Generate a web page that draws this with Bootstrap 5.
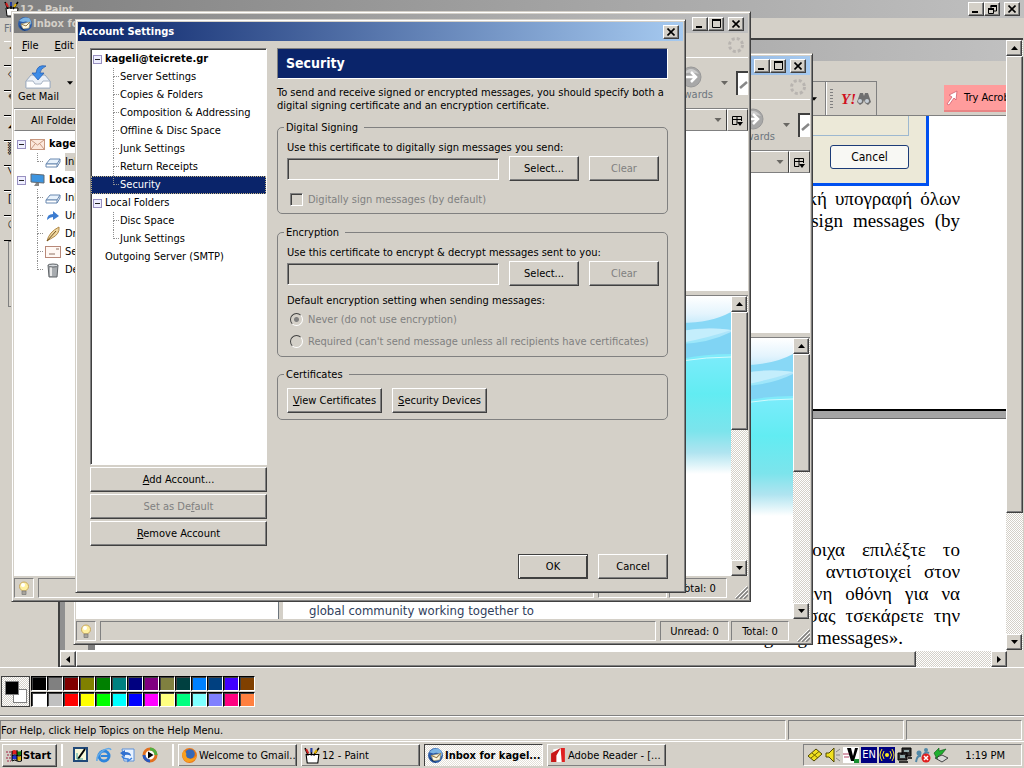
<!DOCTYPE html>
<html lang="en">
<head>
<meta charset="utf-8">
<meta name="viewport" content="width=device-width, initial-scale=1">
<title>12 - Paint</title>
<link href="https://cdn.jsdelivr.net/npm/bootstrap@5.3.0/dist/css/bootstrap.min.css" rel="stylesheet">
<style>
:root{--face:#d4d0c8;--shade:#808080;--dark:#404040;--navy:#0a246a}
body{font-family:"DejaVu Sans Condensed","DejaVu Sans",sans-serif;font-size:11px;line-height:13px;color:#000;background:var(--face)}
button,input{font:inherit;line-height:13px;color:#000}
svg{display:block;flex:none}
ul{list-style:none;margin:0;padding:0}
.nowrap{white-space:nowrap}
.w-btn{background:var(--face);border:1px solid;border-color:#fff var(--dark) var(--dark) #fff;box-shadow:inset -1px -1px var(--shade);border-radius:0;padding:0;height:25px;flex:none;color:#000}
.w-btn:disabled{color:var(--shade)}
.w-btn.is-default{border-color:var(--dark);box-shadow:inset 1px 1px #fff,inset -1px -1px var(--dark)}
.cap-btn{width:16px;height:14px;padding:0;border:1px solid;border-color:#fff var(--dark) var(--dark) #fff;background:var(--face);box-shadow:inset -1px -1px var(--shade);display:flex;align-items:center;justify-content:center}
.sunk{border:1px solid;border-color:var(--shade) #fff #fff var(--shade)}
.sunk2{border:1px solid;border-color:var(--shade) #fff #fff var(--shade);box-shadow:inset 1px 1px var(--dark)}
.frame{background:var(--face);border:1px solid;border-color:var(--face) var(--dark) var(--dark) var(--face);box-shadow:inset 1px 1px #fff,inset -1px -1px var(--shade);padding:2px;display:flex;flex-direction:column;overflow:hidden}
.floating{position:absolute}
.win-a{left:11px;top:11px;width:740px;height:591px;z-index:3}
.win-b{left:73px;top:53px;width:740px;height:592px;z-index:2}
.win-dlg{left:75px;top:19px;width:611px;height:574px;z-index:4}
.title-bar{height:19px;font-weight:700;color:#fff;white-space:nowrap}
.t-idle{background:linear-gradient(90deg,#808080,#c0c0c0);color:var(--face)}
.t-live{background:linear-gradient(90deg,#0a246a,#a6caf0)}
.frame .title-bar{padding-left:3px}
.win-dlg .title-bar{padding-left:1px}
.menu-row{height:24px}
.tool-row{height:52px;border-top:1px solid #fff;border-bottom:1px solid var(--shade)}
.head-cell{height:22px;border:1px solid;border-color:#fff var(--dark) var(--shade) #fff;background:var(--face)}
.folders{width:203px;background:#fff}
.folders li,.tree li{height:18px;line-height:18px;white-space:nowrap;position:relative}
.folders .top-item{padding-left:3px;font-weight:700}
.sub-item{padding-left:31px}
.sub-item::before{content:"";position:absolute;left:23px;top:0;width:6px;height:9px;border:dotted #909090;border-width:0 0 1px 1px}
.sub-item:not(.last)::after{content:"";position:absolute;left:23px;top:9px;height:9px;border-left:1px dotted #909090}
.in-focus{background:var(--face)}
.tree .sub-item{padding-left:29px}
.tree .sub-item::before,.tree .sub-item::after{left:22px}
.tree .top-item{padding-left:2px;gap:3px}
.tree .lone{padding-left:14px}
.tree .chosen{background:var(--navy);color:#fff;outline:1px dotted #c0b080;outline-offset:-1px}
.tree{padding-top:1px}
.toggle{width:9px;height:9px;padding:0;border:1px solid #9890c0;background:#eef;display:inline-flex;align-items:center;justify-content:center;flex:none}
.toggle::before{content:"";width:5px;height:1px;background:#222}
.status-row{height:23px;padding-top:2px}
.cell{height:20px;display:flex;align-items:center;justify-content:center;white-space:nowrap}
.lamp{width:20px}
.unread{width:69px;margin-right:2px}
.total{width:58px}
.sbar{width:17px;flex:none;background:repeating-conic-gradient(#fff 0 25%,#d4d0c8 0 50%) 0 0/2px 2px;display:flex;flex-direction:column}
.sbar-h{height:17px;background:repeating-conic-gradient(#fff 0 25%,#d4d0c8 0 50%) 0 0/2px 2px;display:flex;border-top:1px solid #fff}
.arrow{width:16px;height:16px;flex:none;padding:0;background:var(--face);border:1px solid;border-color:#fff var(--dark) var(--dark) #fff;box-shadow:inset -1px -1px var(--shade);display:flex;align-items:center;justify-content:center}
.thumb{background:var(--face);border:1px solid;border-color:#fff var(--dark) var(--dark) #fff;box-shadow:inset -1px -1px var(--shade)}
.thumb-mail{height:118px}
.thumb-doc{flex:0 0 457px}
.thumb-h{flex:0 0 840px}
.mail-list{height:160px;background:#fff}
.preview{background:#fff;border-top:1px solid var(--shade)}
.blurb{font-size:13px;line-height:16px;color:#30405c;padding:0 0 0 26px}
.search-stub{width:12px;height:24px;background:#fff;border:solid var(--dark);border-width:2px 0 0 2px;overflow:hidden}
.banner{height:31px;background:var(--navy);color:#fff;font-size:14px;font-weight:700;padding-left:8px;margin:0 0 7px}
.intro{margin:0 0 9px}
.right-pane{min-width:0}
fieldset{border:1px solid var(--shade);border-radius:5px;padding:7px 8px 0 9px;margin:0}
legend{float:none;width:auto;font-size:11px;line-height:13px;height:13px;margin:0 0 0 -3px;padding:0 6px 0 2px}
.cert{height:22px;background:var(--face);border-radius:0;flex:1 1 0;min-width:0;padding:0 3px;outline:0}
.cert-row{gap:10px;padding:2px 0 0}
.w70{width:70px}
.opt{color:var(--shade);height:13px;gap:5px;padding-left:3px}
.opt input{appearance:none;margin:0;width:13px;height:13px;flex:none}
.box{border:1px solid;border-color:var(--shade) #fff #fff var(--shade);box-shadow:inset 1px 1px var(--dark)}
.dot{border:1px solid;border-color:var(--dark) #fff #fff var(--dark);border-radius:50%}
.dot:checked{background:radial-gradient(circle,var(--shade) 0 2px,transparent 3px)}
.sign-opt{margin:12px 0 7px}
.fs-enc{margin-top:12px}
.fs-cert{margin-top:11px}
.opt-1{margin-top:6px}
.opt-2{margin:9px 0 8px}
.cert-btns{gap:10px;padding-bottom:6px}
.cert-btns .w-btn{width:95px}
.col-left{width:177px}
.acts{gap:2px;padding-top:2px}
.dlg-main{padding:7px 15px 8px 12px;gap:10px}
.dlg-foot{padding:0 15px 11px;gap:10px}
.paint-title{height:18px}
.paint-menu{height:20px}
.paint-body{padding-right:1px}
.toolbox{width:58px;padding:3px 0 0 4px}
.tool{height:25px;border-bottom:1px solid #000;border-top:1px solid #fff;padding-left:4px;overflow:hidden}
.tool-opts{height:66px;border:1px solid var(--shade);margin-left:4px;border-right:0}
.canvas{border:solid var(--dark);border-width:2px 0 0 2px}
.corner{width:16px}
.r-title{height:21px;background:linear-gradient(90deg,#808080,#c0c0c0)}
.r-menu{height:20px}
.r-tools{height:35px;border-bottom:1px solid var(--shade)}
.r-toolset{border:solid var(--shade);border-width:1px 1px 0 0;width:817px}
.y-part{width:51px;border-left:1px solid var(--shade);box-shadow:inset 1px 0 #fff;gap:8px}
.grip{width:3px;height:20px;background:repeating-linear-gradient(#808080 0 1px,transparent 1px 3px)}
.yh{font:italic 700 15px/16px "Liberation Serif",serif;color:#d01020}
.promo{background:#ff9c9c;height:27px;width:62px;overflow:hidden;border-bottom:2px solid #e88484;gap:6px;padding-left:2px}
.side{width:28px;background:var(--face);border-left:5px solid #909090}
.side-edge{width:7px;background:var(--shade)}
.page{background:#fff;padding-right:46px;font-family:"Liberation Serif",serif;font-size:19px;line-height:22px}
.page .ln{display:flex;justify-content:flex-end;height:22px;white-space:nowrap}
.g8{gap:8px}.g10{gap:10px}.g13{gap:13px}.g17{gap:17px}
.shot{height:70px;width:400px;background:#ece9d8;border:solid #0050f0;border-width:0 3px 3px 0;margin:0 31px 2px 0;padding:0 17px 0 0}
.shot-in{height:20px;border:solid #9db8d0;border-width:0 1px 1px 0;margin-bottom:9px}
.shot button{height:24px;width:79px;background:#f8f8f4;border:1px solid #1c3c78;border-radius:3px;font:12px/16px "DejaVu Sans Condensed",sans-serif;padding:0}
.gap-page{height:10px;background:#a4a4a4;border-top:2px solid #000;border-bottom:1px solid #666}
.sheet-1{height:293px}
.sheet-2{padding-bottom:1px}
.last-ln{padding-right:57px}
.palette{height:49px;border-top:1px solid #fff;padding:8px 1px;gap:1px}
.inkwell{width:29px;height:31px;border:1px solid var(--dark);background:repeating-conic-gradient(#fff 0 25%,#d4d0c8 0 50%) 0 0/2px 2px;position:relative}
.ink{position:absolute;width:14px;height:14px;border:1px solid var(--shade)}
.fore{left:3px;top:4px;background:#000;z-index:1}
.back{left:11px;top:12px;background:#fff}
.inks{display:grid;grid-template-columns:repeat(14,16px);grid-auto-rows:16px}
.swatch{width:16px;height:15px;padding:0;border:1px solid;border-color:#000 #fff #fff #000;box-shadow:inset 1px 1px var(--dark)}
.p-status{height:25px;border-top:1px solid #fff;padding:3px 2px 0 0;box-shadow:0 -1px var(--shade);gap:2px}
.p-status .cell{width:116px}
.taskbar{height:27px;border-top:1px solid #fff;padding:2px 2px 2px}
.taskbar .w-btn{height:23px;white-space:nowrap}
.taskbar .start{width:55px;font-weight:700;gap:1px;padding:0 3px}
.taskbar .task{width:119px;display:flex;align-items:center;gap:1px;padding:0 2px;overflow:hidden}
.taskbar .task.on{font-weight:700;background:repeating-conic-gradient(#fff 0 25%,#e4e0d8 0 50%) 0 0/2px 2px;border-color:var(--dark) #fff #fff var(--dark);box-shadow:none}
.divide{width:2px;border:solid;border-width:0 1px;border-color:var(--shade) #fff}
.tray{width:219px;gap:2px;padding:0 16px 0 3px}
.lang{background:#000080;color:#fff;width:16px;height:16px;line-height:16px;text-align:center}
.quick{gap:7px;padding:0 14px 0 10px}
</style>
</head>
<body>
<svg width="0" height="0" class="position-absolute" aria-hidden="true">
<defs>
<linearGradient id="sea" x1="0" y1="0" x2="0" y2="1"><stop offset="0" stop-color="#fff"/><stop offset=".1" stop-color="#e4f4fd"/><stop offset=".2" stop-color="#b0e4fa"/><stop offset=".36" stop-color="#78ecfa"/><stop offset=".55" stop-color="#62ecf2"/><stop offset=".76" stop-color="#7ce4ec"/><stop offset=".88" stop-color="#b0e4f0"/><stop offset="1" stop-color="#fff"/></linearGradient>
<symbol id="wave" viewBox="0 0 50 178"><rect width="50" height="178" fill="url(#sea)"/><path d="M0 27Q30 27 50 16V34Q26 30 0 35Z" fill="#88d8f6"/><path d="M0 35Q30 31 50 34Q30 41 0 47Z" fill="#c4eefc"/><path d="M0 48Q28 47 50 36V58Q24 58 0 63Z" fill="#80d4f4"/><path d="M0 65Q26 61 50 61" fill="none" stroke="#d0fafc"/></symbol>
<symbol id="bird" viewBox="0 0 16 16"><circle cx="8" cy="8" r="7" fill="#2c5ca8"/><path d="M2 5Q6 0 12 2Q15 5 14 9Q11 4 6 6Z" fill="#7cb4e4"/><path d="M4 8L13 6L12 12L6 13Z" fill="#fff8e0" stroke="#aa9868" stroke-width=".6"/><path d="M4 8L9 10L13 6" fill="none" stroke="#907848"/><path d="M2 9Q4 14 9 15L5 12Z" fill="#102850"/></symbol>
<symbol id="min" viewBox="0 0 8 8"><path d="M0 6h6v2H0z"/></symbol>
<symbol id="max" viewBox="0 0 9 9"><path d="M.5 1v7.500h8V1" fill="none" stroke="#000"/><path d="M0 0h9v2H0z"/></symbol>
<symbol id="rest" viewBox="0 0 9 9"><path d="M3 3V1h5.500v5H6M.5 4v4.500h5V4" fill="none" stroke="#000"/><path d="M2.500 0h6.500v2H2.500zM0 3h6v2H0z"/></symbol>
<symbol id="cls" viewBox="0 0 8 8"><path d="M.5 .5L7.500 7.500M7.500 .5L.5 7.500" stroke="#000" stroke-width="1.600"/></symbol>
<symbol id="dn" viewBox="0 0 7 4"><path d="M0 0h7L3.500 4z"/></symbol>
<symbol id="up" viewBox="0 0 7 4"><path d="M0 4h7L3.500 0z"/></symbol>
<symbol id="throb" viewBox="0 0 16 16"><circle cx="8" cy="8" r="6.500" fill="none" stroke="#b8b4b0" stroke-width="3" stroke-dasharray="3 2.100"/></symbol>
<symbol id="fwd" viewBox="0 0 22 22"><circle cx="11" cy="11" r="10" fill="#a8a8a8" stroke="#989898"/><path d="M3 8Q11 -2 19 8Q11 5 3 8Z" fill="#ccc"/><path d="M4 11H16M11 6L16 11L11 16" fill="none" stroke="#fff" stroke-width="2.500"/></symbol>
<symbol id="pick" viewBox="0 0 11 11"><path d="M.5 9.500V1.500H9.500V6M.5 9.500H5M.5 4.500H9.500M5 1.500V9.500" fill="none" stroke="#000"/><path d="M5 7h6L8 11z"/></symbol>
<symbol id="glass" viewBox="0 0 10 14"><path d="M2 11L9 5" stroke="#888" stroke-width="2.500"/></symbol>
<symbol id="bulb" viewBox="0 0 12 15"><circle cx="6" cy="5.500" r="4.500" fill="#fff0a0" stroke="#c8a860"/><circle cx="5" cy="4" r="2" fill="#fff"/><path d="M4 10h4v3.500H4z" fill="#a8a49c" stroke="#777" stroke-width=".7"/></symbol>
<symbol id="rsz" viewBox="0 0 13 13"><path d="M1 13L13 1M5 13L13 5M9 13L13 9" stroke="#808080" stroke-width="1.500"/><path d="M0 12L12 0M4 12L13 3M8 12L13 7" stroke="#fff"/></symbol>
<symbol id="tray-in" viewBox="0 0 16 12"><path d="M1 8L5 3H15L12 8Z" fill="#e8f2fc" stroke="#6888b0"/><path d="M1 8h11v3H1z" fill="#fff" stroke="#6888b0"/><path d="M12 11L15 6V3" fill="none" stroke="#6888b0"/></symbol>
<symbol id="paint" viewBox="0 0 16 16"><path d="M2 7h12l-1 8H3z" fill="#fff" stroke="#000"/><path d="M4 8L1 1M7 8V1M9 8L14 1" stroke="#000" stroke-width="1.500"/><path d="M2 2l2 4" stroke="#d02020" stroke-width="2"/><path d="M12 3l-2 3" stroke="#e0b000" stroke-width="2"/><path d="M7 1v4" stroke="#2040c0" stroke-width="1.500"/></symbol>
</defs></svg>

<div class="vh-100 d-flex flex-column overflow-hidden position-relative">

  <!-- Paint -->
  <header class="title-bar paint-title t-idle d-flex align-items-center px-1 flex-shrink-0">
    <svg width="16" height="16"><use href="#paint"/></svg><span class="flex-grow-1">12 - Paint</span>
    <button class="cap-btn" aria-label="Minimize"><svg width="8" height="8"><use href="#min"/></svg></button>
    <button class="cap-btn" aria-label="Restore"><svg width="9" height="9"><use href="#rest"/></svg></button>
    <button class="cap-btn ms-1" aria-label="Close"><svg width="8" height="8"><use href="#cls"/></svg></button>
  </header>
  <nav class="paint-menu d-flex align-items-center px-1 text-secondary flex-shrink-0">File</nav>
  <main class="paint-body d-flex flex-grow-1 overflow-hidden">
    <div class="toolbox flex-shrink-0">
      <div class="tool">✦</div><div class="tool">◇</div><div class="tool">✎</div><div class="tool">◢</div><div class="tool">▒</div><div class="tool">╲</div><div class="tool">[</div><div class="tool">○</div>
      <div class="tool-opts"></div>
    </div>
    <div class="canvas d-flex flex-column flex-grow-1 overflow-hidden">
      <div class="d-flex flex-grow-1 overflow-hidden">
        <div class="d-flex flex-column flex-grow-1 overflow-hidden">
          <div class="r-title flex-shrink-0"></div><div class="r-menu flex-shrink-0"></div>
          <div class="r-tools d-flex justify-content-between flex-shrink-0">
            <div class="r-toolset d-flex justify-content-end">
              <div class="d-flex align-items-center pe-2"><svg width="6" height="4"><use href="#dn"/></svg></div>
              <div class="y-part d-flex align-items-center ps-1"><span class="grip"></span>
                <span class="d-flex align-items-center"><span class="yh">Y!</span><svg width="15" height="13" viewBox="0 0 15 13"><path d="M1 10L4 1h3l1 3 1-3h3l3 9-3 3-3-2-1-3-1 3-3 2z" fill="#707070"/><circle cx="4" cy="9" r="2" fill="#c8d0d8"/><circle cx="11" cy="9" r="2" fill="#c8d0d8"/></svg></span></div>
            </div>
            <div class="promo d-flex align-items-center nowrap mt-1"><svg width="12" height="16" viewBox="0 0 12 16"><path d="M1 14L6 7L3 5L11 1L10 10L8 8L3 15Z" fill="#fff" stroke="#d06070" stroke-width=".8"/></svg><span>Try Acrobat</span></div>
          </div>
          <div class="d-flex flex-grow-1 overflow-hidden">
            <div class="side flex-shrink-0"></div><div class="side-edge flex-shrink-0"></div>
            <article class="flex-grow-1 d-flex flex-column overflow-hidden">
              <section class="page sheet-1 flex-shrink-0">
                <div class="shot ms-auto"><div class="shot-in"></div><div class="d-flex justify-content-end"><button>Cancel</button></div></div>
                <p class="ln g8 m-0"><span>ηλεκτρονική</span><span>υπογραφή</span><span>όλων</span></p>
                <p class="ln g10 m-0"><span>sign</span><span>messages</span><span>(by</span></p>
              </section>
              <div class="gap-page flex-shrink-0"></div>
              <section class="page sheet-2 flex-grow-1 d-flex flex-column justify-content-end overflow-hidden">
                <p class="ln g17 m-0"><span>αντίστοιχα</span><span>επιλέξτε</span><span>το</span></p>
                <p class="ln g13 m-0"><span>αντιστοιχεί</span><span>στον</span></p>
                <p class="ln g13 m-0"><span>επόμενη</span><span>οθόνη</span><span>για</span><span>να</span></p>
                <p class="ln g10 m-0"><span>σας</span><span>τσεκάρετε</span><span>την</span></p>
                <p class="ln g10 m-0 last-ln"><span>signing</span><span>messages».</span></p>
              </section>
            </article>
          </div>
        </div>
        <div class="sbar"><button class="arrow" aria-label="Scroll up"><svg width="7" height="4"><use href="#up"/></svg></button><div class="thumb thumb-doc"></div><div class="flex-grow-1"></div><button class="arrow" aria-label="Scroll down"><svg width="7" height="4"><use href="#dn"/></svg></button></div>
      </div>
      <div class="d-flex flex-shrink-0"><div class="sbar-h flex-grow-1 overflow-hidden"><button class="arrow" aria-label="Scroll left"><svg width="4" height="7" viewBox="0 0 4 7"><path d="M4 0v7L0 3.500z"/></svg></button><div class="thumb thumb-h"></div><button class="arrow ms-auto" aria-label="Scroll right"><svg width="4" height="7" viewBox="0 0 4 7"><path d="M0 0v7L4 3.500z"/></svg></button></div><div class="corner"></div></div>
    </div>
  </main>
  <div class="palette d-flex flex-shrink-0">
    <div class="inkwell"><span class="ink fore"></span><span class="ink back"></span></div>
    <div class="inks" id="inks"></div>
  </div>
  <div class="p-status d-flex flex-shrink-0">
    <div class="cell sunk flex-grow-1 justify-content-start">For Help, click Help Topics on the Help Menu.</div><div class="cell sunk"></div><div class="cell sunk"></div>
  </div>

  <!-- Taskbar -->
  <footer class="taskbar d-flex flex-shrink-0">
    <button class="w-btn start d-flex align-items-center"><svg width="16" height="14" viewBox="0 0 16 14"><path d="M6 2q2-2 5 0v4q-3-2-5 0z" fill="#e02020"/><path d="M11 2q2 1 4 0v4q-2 1-4 0z" fill="#108010"/><path d="M6 7q2-2 5 0v4q-3-2-5 0z" fill="#2030d0"/><path d="M11 7q2 1 4 0v4q-2 1-4 0z" fill="#e0b000"/><path d="M15.500 1v11q-2 1-4.500 0-2-2-5 0V2M11 1v11M6 6.500q3-1.500 5 0 2 1 4 0" fill="none" stroke="#000"/><path d="M0 3h5M1 6h4M0 9h5M1 12h4" stroke="#a02040" stroke-dasharray="2 1"/></svg><span>Start</span></button>
    <div class="divide ms-1"></div>
    <div class="d-flex align-items-center quick">
      <svg width="16" height="16" viewBox="0 0 16 16"><rect x="1" y="1" width="13" height="13" fill="#f8f8d8" stroke="#204878" stroke-width="2"/><path d="M5 12L12 2" stroke="#000" stroke-width="2"/><path d="M4 6v6h6" fill="none" stroke="#40a0a0"/></svg>
      <svg width="16" height="16" viewBox="0 0 16 16"><circle cx="8" cy="9" r="5" fill="none" stroke="#2c84dc" stroke-width="3"/><path d="M5 9h9" stroke="#2c84dc" stroke-width="2"/><path d="M1 14Q0 8 8 3Q14 0 15 3" fill="none" stroke="#60a8e8" stroke-width="1.500"/></svg>
      <svg width="16" height="16" viewBox="0 0 16 16"><path d="M3 2h12v12H5z" fill="#e8f2ff" stroke="#5c90d8"/><path d="M1 6L6 3v2q6 0 6 4Q9 7 6 8v2z" fill="#3070d0"/><path d="M13 11l-4 3v-2q-5 0-6-3" fill="none" stroke="#3c80dc" stroke-width="1.500"/></svg>
      <svg width="16" height="16" viewBox="0 0 16 16"><circle cx="8" cy="8" r="6" fill="#fff" stroke="#e07020" stroke-width="3"/><path d="M8 2a6 6 0 0 1 6 6" fill="none" stroke="#50b040" stroke-width="3"/><path d="M8 14a6 6 0 0 1-6-6" fill="none" stroke="#2858c0" stroke-width="3"/><path d="M6 4.500v7L11.500 8z"/></svg>
    </div>
    <div class="divide me-1"></div>
    <div class="d-flex flex-grow-1 gap-1 overflow-hidden">
      <button class="w-btn task"><svg width="17" height="17" viewBox="0 0 16 16"><circle cx="8" cy="8" r="7" fill="#e87818"/><circle cx="8.500" cy="6.500" r="4.500" fill="#3468b8"/><path d="M1 6Q1 12 6 14Q13 15 15 8Q12 12 8 11Q4 10 5 6L3 3Z" fill="#f8a020"/></svg><span>Welcome to Gmail...</span></button>
      <button class="w-btn task"><svg width="17" height="17"><use href="#paint"/></svg><span>12 - Paint</span></button>
      <button class="w-btn task on"><svg width="17" height="17"><use href="#bird"/></svg><span>Inbox for kagel...</span></button>
      <button class="w-btn task"><svg width="17" height="17" viewBox="0 0 16 16"><path d="M3 2l8-1 1 13H4z" fill="#fff"/><path d="M1 6l9-5-4 7v6H1z" fill="#c81818"/><path d="M10 1h4v13h-3z" fill="#e02020"/></svg><span>Adobe Reader - [...</span></button>
    </div>
    <div class="tray sunk d-flex align-items-center flex-shrink-0">
      <svg width="16" height="16" viewBox="0 0 16 16"><path d="M1 9L9 2L15 7L7 14Z" fill="#f0e020" stroke="#504800"/><path d="M4 11L12 4.500M5 6l6 5" stroke="#706400"/></svg>
      <svg width="16" height="16" viewBox="0 0 16 16"><path d="M1 6h3l5-5v14L4 10H1z" fill="#f0e020" stroke="#504800"/><path d="M11 5l4-3M11 8h4M11 11l4 3" stroke="#888"/></svg>
      <svg width="16" height="16" viewBox="0 0 16 16"><rect width="16" height="16" fill="#fff"/><path d="M4 1h4l2 8 2-8h3l-4 13H8z"/><path d="M0 7h6M1 10h5" stroke="#b04060"/><path d="M11 12h5v4h-5z" fill="#189030"/></svg>
      <span class="lang">EN</span>
      <svg width="16" height="16" viewBox="0 0 16 16"><rect width="16" height="16" fill="#000080"/><circle cx="8" cy="8" r="2" fill="#f8e820"/><path d="M5 4q-3 4 0 8M11 4q3 4 0 8M3 2q-4 6 0 12M13 2q4 6 0 12" fill="none" stroke="#f8e820"/></svg>
      <svg width="16" height="16" viewBox="0 0 16 16"><path d="M5 1h9v8H5zM1 6h9v7H1z" fill="#303030" stroke="#000"/><path d="M3 8h5v3H3zM7 3h5v2H7z" fill="#90a8a8"/><path d="M2 15h9M11 11h4" stroke="#000" stroke-width="1.500"/></svg>
      <svg width="16" height="16" viewBox="0 0 16 16"><circle cx="4" cy="6" r="2.500" fill="#5088a8"/><circle cx="11" cy="3" r="2" fill="#5088a8"/><path d="M1 15q1-7 5-6M8 9q2-5 6-3" stroke="#5088a8" stroke-width="2" fill="none"/><circle cx="11" cy="11" r="4.500" fill="#e02020"/><path d="M9 9l4 4M13 9l-4 4" stroke="#fff" stroke-width="1.500"/></svg>
      <svg width="16" height="16" viewBox="0 0 16 16"><path d="M2 11l7-3 6 3-6 4z" fill="#d8d8d8" stroke="#444"/><path d="M1 6l5-5v3l7-2-4 5-4 2-1 3z" fill="#20b030" stroke="#085010" stroke-width=".6"/></svg>
      <time class="ms-auto nowrap">1:19 PM</time>
    </div>
  </footer>

  <!-- Back mail window -->
  <section class="frame floating win-b">
    <div class="title-bar t-live d-flex align-items-center justify-content-end pe-1 flex-shrink-0">
      <button class="cap-btn" aria-label="Minimize"><svg width="8" height="8"><use href="#min"/></svg></button><button class="cap-btn" aria-label="Maximize"><svg width="9" height="9"><use href="#max"/></svg></button><button class="cap-btn ms-1" aria-label="Close"><svg width="8" height="8"><use href="#cls"/></svg></button>
    </div>
    <div class="menu-row d-flex align-items-center justify-content-end pe-1 flex-shrink-0"><svg width="16" height="16"><use href="#throb"/></svg></div>
    <div class="tool-row d-flex align-items-center justify-content-end flex-shrink-0">
      <div class="text-secondary d-flex flex-column align-items-center"><svg width="22" height="22"><use href="#fwd"/></svg><span>Forwards</span></div>
      <svg width="7" height="4" class="mx-2" opacity=".5"><use href="#dn"/></svg><div class="search-stub"><svg width="10" height="22" viewBox="0 0 10 14"><use href="#glass"/></svg></div>
    </div>
    <div class="d-flex flex-grow-1 overflow-hidden">
      <div class="folders border-end border-secondary"></div><div class="ps-1"></div>
      <div class="d-flex flex-column flex-grow-1">
        <div class="d-flex flex-shrink-0"><div class="head-cell flex-grow-1 d-flex align-items-center justify-content-end pe-1"><svg width="8" height="4" opacity=".5"><use href="#dn"/></svg></div><div class="head-cell px-1 d-flex align-items-center"><svg width="11" height="11"><use href="#pick"/></svg></div></div>
        <div class="mail-list flex-shrink-0"></div><div class="pt-1"></div>
        <div class="preview d-flex flex-grow-1">
          <div class="flex-grow-1 d-flex flex-column justify-content-between"><svg width="50" height="178" class="ms-auto"><use href="#wave"/></svg><div class="blurb">global community working together to</div></div>
          <div class="sbar"><button class="arrow" aria-label="Scroll up"><svg width="7" height="4"><use href="#up"/></svg></button><div class="thumb thumb-mail"></div><button class="arrow mt-auto" aria-label="Scroll down"><svg width="7" height="4"><use href="#dn"/></svg></button></div>
        </div>
      </div>
    </div>
    <div class="status-row d-flex flex-shrink-0"><div class="cell sunk lamp"><svg width="12" height="15"><use href="#bulb"/></svg></div><div class="cell sunk flex-grow-1 mx-1"></div><div class="cell sunk unread">Unread: 0</div><div class="cell sunk total">Total: 0</div><svg width="13" height="13" class="align-self-end ms-2"><use href="#rsz"/></svg></div>
  </section>

  <!-- Front mail window -->
  <section class="frame floating win-a">
    <div class="title-bar t-idle d-flex align-items-center pe-1 flex-shrink-0">
      <svg width="16" height="16"><use href="#bird"/></svg><span class="flex-grow-1">Inbox for kageli@teicrete.gr</span>
      <button class="cap-btn" aria-label="Minimize"><svg width="8" height="8"><use href="#min"/></svg></button><button class="cap-btn" aria-label="Maximize"><svg width="9" height="9"><use href="#max"/></svg></button><button class="cap-btn ms-1" aria-label="Close"><svg width="8" height="8"><use href="#cls"/></svg></button>
    </div>
    <div class="menu-row d-flex align-items-center pe-1 ps-2 gap-3 flex-shrink-0"><span><u>F</u>ile</span><span><u>E</u>dit</span><svg width="16" height="16" class="ms-auto"><use href="#throb"/></svg></div>
    <div class="tool-row d-flex align-items-center flex-shrink-0">
      <div class="d-flex flex-column align-items-center ps-1"><svg width="26" height="26" viewBox="0 0 26 26"><path d="M1 17L6 11H20L25 17V24H1Z" fill="#e8eef6" stroke="#98a8bc"/><path d="M1 17h7l2 3h6l2-3h7v7H1z" fill="#fff" stroke="#a8b4c4"/><path d="M21 2Q12 0 11 9H7L13 16L19 9H15Q15 5 21 2Z" fill="#3c8ce8" stroke="#1c58b0" stroke-width=".7"/></svg><span>Get Mail</span></div>
      <svg width="6" height="4" class="ms-2"><use href="#dn"/></svg>
      <div class="ms-auto text-secondary d-flex flex-column align-items-center"><svg width="22" height="22"><use href="#fwd"/></svg><span>Forwards</span></div>
      <svg width="7" height="4" class="mx-2" opacity=".5"><use href="#dn"/></svg><div class="search-stub"><svg width="10" height="22" viewBox="0 0 10 14"><use href="#glass"/></svg></div>
    </div>
    <div class="d-flex flex-grow-1 overflow-hidden">
      <div class="folders d-flex flex-column"><div class="head-cell d-flex align-items-center ps-3 flex-shrink-0">All Folders</div>
        <ul class="pt-1">
          <li class="top-item d-flex align-items-center gap-1"><button class="toggle" aria-label="Collapse"></button><svg width="15" height="11" viewBox="0 0 15 11"><rect x=".5" y=".5" width="14" height="10" fill="#fce8dc" stroke="#c89880"/><path d="M1 1l6.500 5L14 1M1 10l4-5M14 10l-4-5" fill="none" stroke="#c89880"/></svg><span>kageli@teicrete.gr</span></li>
          <li class="sub-item last d-flex align-items-center gap-1"><svg width="16" height="12"><use href="#tray-in"/></svg><span class="in-focus">Inbox</span></li>
          <li class="top-item d-flex align-items-center gap-1"><button class="toggle" aria-label="Collapse"></button><svg width="15" height="14" viewBox="0 0 15 14"><path d="M1 1l13 1v8L1 9z" fill="#3c94e0" stroke="#606870"/><path d="M6 10h3v3H4z" fill="#888"/></svg><span>Local Folders</span></li>
          <li class="sub-item d-flex align-items-center gap-1"><svg width="16" height="12"><use href="#tray-in"/></svg><span>Inbox</span></li>
          <li class="sub-item d-flex align-items-center gap-1"><svg width="16" height="12" viewBox="0 0 16 12"><path d="M2 10Q2 4 8 4V1L14 6L8 10V7Q5 7 2 10Z" fill="#3c7cd0"/></svg><span>Unsent</span></li>
          <li class="sub-item d-flex align-items-center gap-1"><svg width="16" height="16" viewBox="0 0 16 16"><path d="M2 15Q4 6 14 1Q15 8 7 12Z" fill="#f0d8a0" stroke="#b08848"/><path d="M2 15L11 5" stroke="#705020"/></svg><span>Drafts</span></li>
          <li class="sub-item d-flex align-items-center gap-1"><svg width="16" height="12" viewBox="0 0 16 12"><rect x=".5" y=".5" width="15" height="11" fill="#fff8f4" stroke="#b88878"/><path d="M11 3h3M4 8h6" stroke="#907060"/></svg><span>Sent</span></li>
          <li class="sub-item last d-flex align-items-center gap-1"><svg width="16" height="15" viewBox="0 0 16 15"><path d="M3 2h10l-1 12H4z" fill="#a8acb0" stroke="#606468"/><path d="M6 3v10" stroke="#e8e8e8" stroke-width="2"/><ellipse cx="8" cy="2.500" rx="5" ry="1.500" fill="#d8dce0" stroke="#606468"/></svg><span>Deleted</span></li>
        </ul></div><div class="ps-1"></div>
      <div class="d-flex flex-column flex-grow-1">
        <div class="d-flex flex-shrink-0"><div class="head-cell flex-grow-1 d-flex align-items-center justify-content-end pe-1"><svg width="8" height="4" opacity=".5"><use href="#dn"/></svg></div><div class="head-cell px-1 d-flex align-items-center"><svg width="11" height="11"><use href="#pick"/></svg></div></div>
        <div class="mail-list flex-shrink-0"></div><div class="pt-1"></div>
        <div class="preview d-flex flex-grow-1">
          <svg width="50" height="178" class="ms-auto"><use href="#wave"/></svg>
          <div class="sbar"><button class="arrow" aria-label="Scroll up"><svg width="7" height="4"><use href="#up"/></svg></button><div class="thumb thumb-mail"></div><button class="arrow mt-auto" aria-label="Scroll down"><svg width="7" height="4"><use href="#dn"/></svg></button></div>
        </div>
      </div>
    </div>
    <div class="status-row d-flex flex-shrink-0"><div class="cell sunk lamp"><svg width="12" height="15"><use href="#bulb"/></svg></div><div class="cell sunk flex-grow-1 mx-1"></div><div class="cell sunk unread">Unread: 0</div><div class="cell sunk total">Total: 0</div><svg width="13" height="13" class="align-self-end ms-2"><use href="#rsz"/></svg></div>
  </section>

  <!-- Account Settings -->
  <section class="frame floating win-dlg" role="dialog" aria-label="Account Settings">
    <div class="title-bar t-live d-flex align-items-center pe-1 flex-shrink-0"><span class="flex-grow-1">Account Settings</span><button class="cap-btn" aria-label="Close"><svg width="8" height="8"><use href="#cls"/></svg></button></div>
    <div class="dlg-main d-flex flex-grow-1">
      <div class="col-left d-flex flex-column flex-shrink-0">
        <ul class="tree sunk2 bg-white flex-grow-1">
          <li class="top-item d-flex align-items-center fw-bold"><button class="toggle" aria-label="Collapse"></button>kageli@teicrete.gr</li>
          <li class="sub-item">Server Settings</li><li class="sub-item">Copies &amp; Folders</li><li class="sub-item">Composition &amp; Addressing</li><li class="sub-item">Offline &amp; Disc Space</li><li class="sub-item">Junk Settings</li><li class="sub-item">Return Receipts</li><li class="sub-item last chosen">Security</li>
          <li class="top-item d-flex align-items-center"><button class="toggle" aria-label="Collapse"></button>Local Folders</li>
          <li class="sub-item">Disc Space</li><li class="sub-item last">Junk Settings</li>
          <li class="lone">Outgoing Server (SMTP)</li>
        </ul>
        <div class="d-grid acts"><button class="w-btn"><u>A</u>dd Account...</button><button class="w-btn" disabled>Set as De<u>f</u>ault</button><button class="w-btn"><u>R</u>emove Account</button></div>
      </div>
      <div class="flex-grow-1 right-pane">
        <h1 class="banner sunk d-flex align-items-center">Security</h1>
        <p class="intro">To send and receive signed or encrypted messages, you should specify both a digital signing certificate and an encryption certificate.</p>
        <fieldset class="fs-sign"><legend>Digital Signing</legend>
          <label for="c1" class="d-block">Use this certificate to digitally sign messages you send:</label>
          <div class="d-flex align-items-center cert-row"><input id="c1" class="cert sunk2" type="text" readonly><button class="w-btn w70">Select...</button><button class="w-btn w70" disabled>Clear</button></div>
          <label class="opt d-flex align-items-center sign-opt"><input class="box" type="checkbox" disabled>Digitally sign messages (by default)</label>
        </fieldset>
        <fieldset class="fs-enc"><legend>Encryption</legend>
          <label for="c2" class="d-block">Use this certificate to encrypt &amp; decrypt messages sent to you:</label>
          <div class="d-flex align-items-center cert-row"><input id="c2" class="cert sunk2" type="text" readonly><button class="w-btn w70">Select...</button><button class="w-btn w70" disabled>Clear</button></div>
          <div class="pt-2">Default encryption setting when sending messages:</div>
          <label class="opt d-flex align-items-center opt-1"><input class="dot" type="radio" name="enc" checked disabled>Never (do not use encryption)</label>
          <label class="opt d-flex align-items-center opt-2"><input class="dot" type="radio" name="enc" disabled>Required (can't send message unless all recipients have certificates)</label>
        </fieldset>
        <fieldset class="fs-cert"><legend>Certificates</legend>
          <div class="d-flex cert-btns"><button class="w-btn"><u>V</u>iew Certificates</button><button class="w-btn"><u>S</u>ecurity Devices</button></div>
        </fieldset>
      </div>
    </div>
    <div class="dlg-foot d-flex justify-content-end flex-shrink-0"><button class="w-btn w70 is-default">OK</button><button class="w-btn w70">Cancel</button></div>
  </section>
</div>
<script>
const inks=['#000','#808080','#800000','#808000','#008000','#008080','#000080','#800080','#808040','#004040','#0080ff','#004080','#4000ff','#804000','#fff','#c0c0c0','#f00','#ff0','#0f0','#0ff','#00f','#f0f','#ffff80','#00ff80','#80ffff','#8080ff','#ff0080','#ff8040'];
document.getElementById('inks').innerHTML=inks.map(c=>`<button class="swatch" aria-label="${c}" style="background:${c}"></button>`).join('');
</script>
<script src="https://cdn.jsdelivr.net/npm/bootstrap@5.3.0/dist/js/bootstrap.bundle.min.js"></script>
</body>
</html>
